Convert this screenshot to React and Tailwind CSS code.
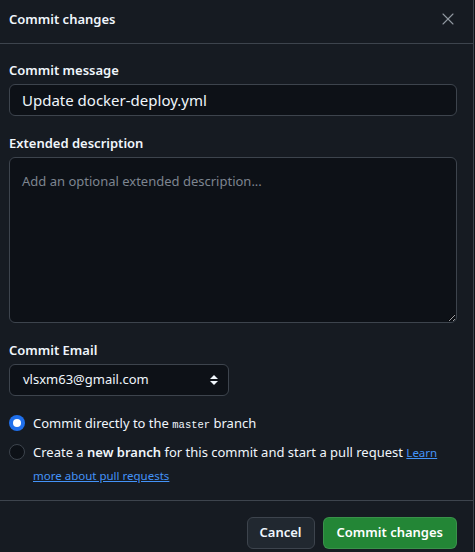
import { X } from "lucide-react";

export default function App() {
  return (
    <div className="w-[475px] h-[552px] overflow-hidden bg-[#0d1117] text-[#f0f6fc] font-['Noto_Sans',sans-serif]">
      <div className="w-[474px] h-[552px] bg-[#161b22] border-r border-[#3d444d] flex flex-col">
        {/* header */}
        <div className="h-[44px] shrink-0 flex items-center justify-between pl-[9px] pr-[15px] pb-[5px] border-b border-[#3d444d]">
          <h2 className="text-[13px] font-semibold leading-5">Commit changes</h2>
          <X size={20} strokeWidth={1.3} className="text-[#9198a1]" />
        </div>

        {/* body */}
        <div className="pl-[9px] pr-[16px] pt-[16px] flex flex-col">
          <label className="text-[13px] font-semibold leading-5 mb-1">Commit message</label>
          <div className="h-[32px] rounded-md border border-[#3d444d] bg-[#0d1117] flex items-center px-3 text-[15px]">
            Update docker-deploy.yml
          </div>

          <label className="text-[13px] font-semibold leading-5 mt-[17px] mb-1">Extended description</label>
          <textarea
            className="h-[166px] rounded-md border border-[#3d444d] bg-[#0d1117] px-3 pt-[13px] text-[13px] leading-5 placeholder-[#7d8590] outline-none resize-y"
            placeholder="Add an optional extended description..."
          />

          <label className="text-[13px] font-semibold leading-5 mt-[17px] mb-1">Commit Email</label>
          <div className="w-[220px] h-[32px] rounded-md border border-[#3d444d] bg-[#0d1117] flex items-center justify-between pl-[13px] pr-[8px] text-[13px]">
            <span>vlsxm63@gmail.com</span>
            <svg width="12" height="14" viewBox="0 0 12 14" className="text-[#f0f6fc]">
              <path d="M6 2 L10 6 H2 Z" fill="currentColor" />
              <path d="M6 12 L10 8 H2 Z" fill="currentColor" />
            </svg>
          </div>

          <div className="mt-[16px] flex items-start gap-2 text-[13px] leading-[22px]">
            <span className="mt-[3px] w-4 h-4 shrink-0 rounded-full bg-[#1f6feb] flex items-center justify-center">
              <span className="w-[8px] h-[8px] rounded-full bg-white" />
            </span>
            <p>
              Commit directly to the{" "}
              <code className="font-['Liberation_Mono',monospace] text-[10.5px]">master</code> branch
            </p>
          </div>

          <div className="mt-[5px] flex items-start gap-2 text-[13px] leading-[22px]">
            <span className="mt-[3px] w-4 h-4 shrink-0 rounded-full border border-[#3d444d] bg-[#0d1117]" />
            <p>
              Create a <b className="font-semibold">new branch</b> for this commit and start a pull request{" "}
              <a className="text-[11.5px] text-[#4493f8] underline">Learn more about pull requests</a>
            </p>
          </div>
        </div>

        {/* footer */}
        <div className="mt-[13px] border-t border-[#3d444d] pt-[16px] pr-[16px] flex justify-end gap-2">
          <button className="h-[32px] px-3 rounded-md border border-[#3d444d] bg-[#212830] text-[13px] font-semibold">
            Cancel
          </button>
          <button className="h-[32px] px-[13px] rounded-md border border-[#ffffff1a] bg-[#238636] text-white text-[13px] font-semibold">
            Commit changes
          </button>
        </div>
      </div>
    </div>
  );
}
